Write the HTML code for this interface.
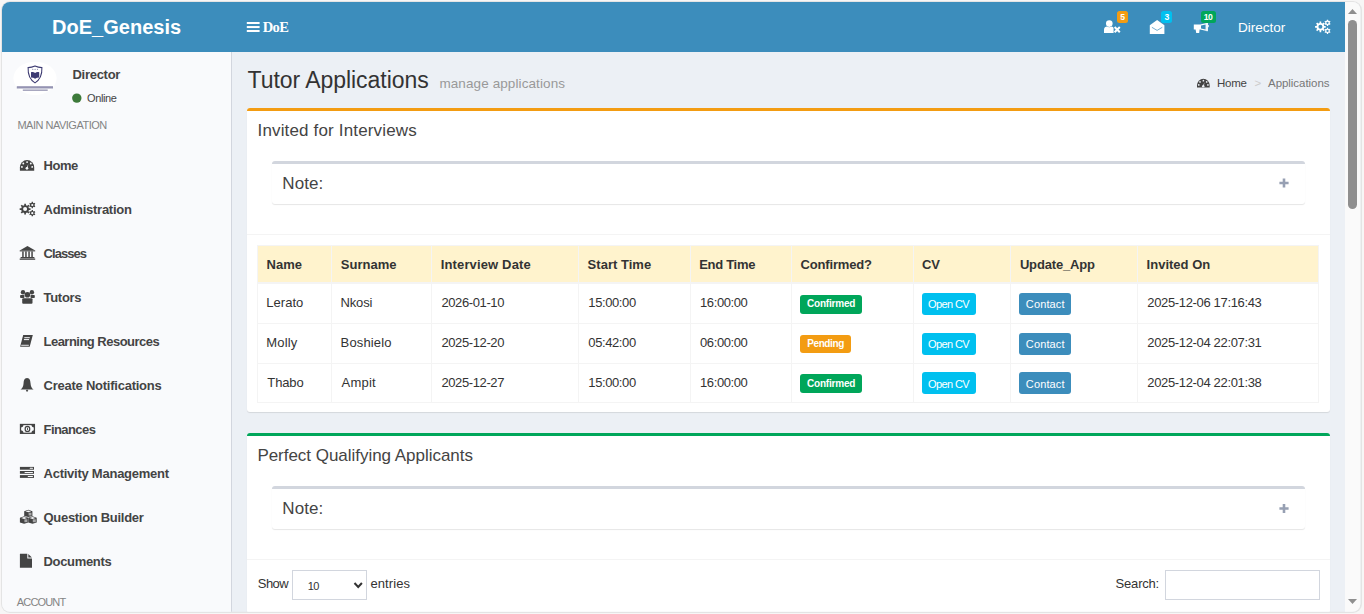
<!DOCTYPE html>
<html><head><meta charset="utf-8">
<style>
html,body{margin:0;padding:0;}
body{width:1364px;height:614px;overflow:hidden;background:#f7f6f6;position:relative;font-family:"Liberation Sans",sans-serif;}
#frame{position:absolute;left:1px;top:1px;width:1361px;height:612px;border-radius:9px;background:#e4e4e4;}
#win{position:absolute;left:0;top:0;width:1364px;height:614px;clip-path:inset(2px 3.6px 2.2px 2px round 8px);background:#ecf0f5;}
.a{position:absolute;}
.t{position:absolute;white-space:nowrap;}
#hdr{left:0;top:0;width:1345px;height:52px;background:#3c8dbc;}
#side{left:0;top:52px;width:231px;height:562px;background:#f9fafc;border-right:1px solid #d2d6de;}
#sb{left:1345px;top:0;width:19px;height:614px;background:#fafafa;}
#thumb{left:1348px;top:20px;width:9px;height:189px;border-radius:4.5px;background:#8f8f8f;}
.box{background:#fff;border-radius:3px;box-shadow:0 1px 1px rgba(0,0,0,0.1);}
.note{background:#fff;border-radius:3px;box-shadow:0 1px 1px rgba(0,0,0,0.1);border-top:3px solid #d2d6de;box-sizing:border-box;}
.hl{height:1px;background:#f4f4f4;}
.vl{width:1px;background:#f4f4f4;}
.badge{border-radius:3px;}
.btn{border-radius:3px;box-sizing:border-box;}
</style></head><body>
<div id="frame"></div>
<div id="win">
<div class="a" id="hdr"></div>
<div class="a" id="side"></div>
<div class="a" id="sb"></div>
<div class="a" id="thumb"></div>
<div class="a" style="left:247px;top:108px;width:1083px;height:304px;background:#fff;border-radius:3px;box-shadow:0 1px 1px rgba(0,0,0,0.1);"></div>
<div class="a" style="left:247px;top:108px;width:1083px;height:3px;background:#f39c12;border-radius:3px 3px 0 0;"></div>
<div class="a" style="left:247px;top:234px;width:1083px;height:1px;background:#f4f4f4;"></div>
<div class="a" style="left:272px;top:161px;width:1033px;height:43px;background:#fff;border-radius:3px;box-shadow:0 1px 1px rgba(0,0,0,0.1);border-top:3px solid #d2d6de;box-sizing:border-box;"></div>
<div class="a" style="left:257px;top:245px;width:1062px;height:158px;background:#fff;box-sizing:border-box;border:1px solid #f4f4f4;"></div>
<div class="a" style="left:258px;top:246px;width:1060px;height:36px;background:#fff3cd;"></div>
<div class="a" style="left:258px;top:282px;width:1060px;height:2px;background:#f4f4f4;"></div>
<div class="a" style="left:258px;top:323px;width:1060px;height:1px;background:#f4f4f4;"></div>
<div class="a" style="left:258px;top:363px;width:1060px;height:1px;background:#f4f4f4;"></div>
<div class="a" style="left:331px;top:246px;width:1px;height:156px;background:#f4f4f4;"></div>
<div class="a" style="left:431px;top:246px;width:1px;height:156px;background:#f4f4f4;"></div>
<div class="a" style="left:578px;top:246px;width:1px;height:156px;background:#f4f4f4;"></div>
<div class="a" style="left:690px;top:246px;width:1px;height:156px;background:#f4f4f4;"></div>
<div class="a" style="left:791px;top:246px;width:1px;height:156px;background:#f4f4f4;"></div>
<div class="a" style="left:913px;top:246px;width:1px;height:156px;background:#f4f4f4;"></div>
<div class="a" style="left:1010px;top:246px;width:1px;height:156px;background:#f4f4f4;"></div>
<div class="a" style="left:1137px;top:246px;width:1px;height:156px;background:#f4f4f4;"></div>
<div class="a" style="left:800px;top:295px;width:62px;height:19px;background:#00a65a;border-radius:3px;"></div>
<div class="a" style="left:922px;top:293px;width:54px;height:22px;background:#00c0ef;border-radius:3px;"></div>
<div class="a" style="left:1019px;top:293px;width:52px;height:22px;background:#3c8dbc;border-radius:3px;"></div>
<div class="a" style="left:800px;top:335px;width:51px;height:18px;background:#f39c12;border-radius:3px;"></div>
<div class="a" style="left:922px;top:333px;width:54px;height:22px;background:#00c0ef;border-radius:3px;"></div>
<div class="a" style="left:1019px;top:333px;width:52px;height:22px;background:#3c8dbc;border-radius:3px;"></div>
<div class="a" style="left:800px;top:374px;width:62px;height:19px;background:#00a65a;border-radius:3px;"></div>
<div class="a" style="left:922px;top:372px;width:54px;height:22px;background:#00c0ef;border-radius:3px;"></div>
<div class="a" style="left:1019px;top:372px;width:52px;height:22px;background:#3c8dbc;border-radius:3px;"></div>
<div class="a" style="left:247px;top:433px;width:1083px;height:200px;background:#fff;border-radius:3px;box-shadow:0 1px 1px rgba(0,0,0,0.1);"></div>
<div class="a" style="left:247px;top:433px;width:1083px;height:3px;background:#00a65a;border-radius:3px 3px 0 0;"></div>
<div class="a" style="left:247px;top:559px;width:1083px;height:1px;background:#f4f4f4;"></div>
<div class="a" style="left:272px;top:486px;width:1033px;height:43px;background:#fff;border-radius:3px;box-shadow:0 1px 1px rgba(0,0,0,0.1);border-top:3px solid #d2d6de;box-sizing:border-box;"></div>
<div class="a" style="left:292px;top:570px;width:75px;height:30px;background:#fff;border:1px solid #d2d6de;box-sizing:border-box;"></div>
<div class="a" style="left:1165px;top:570px;width:155px;height:30px;background:#fff;border:1px solid #d2d6de;box-sizing:border-box;"></div>
<svg class="a" style="left:0;top:0" width="1364" height="614" viewBox="0 0 1364 614">
<path d="M19.90,170.80 L19.90,167.50 A7.15,7.60 0 0 1 34.20,167.50 L34.20,170.80 Z" fill="#444"/>
<circle cx="27.10" cy="162.10" r="0.95" fill="#f9fafc"/>
<circle cx="23.30" cy="163.50" r="0.95" fill="#f9fafc"/>
<circle cx="30.80" cy="163.50" r="0.95" fill="#f9fafc"/>
<circle cx="21.90" cy="166.90" r="0.95" fill="#f9fafc"/>
<circle cx="32.20" cy="166.90" r="0.95" fill="#f9fafc"/>
<path d="M26.30,168.40 L28.30,163.90 L27.60,168.60 Z" fill="#f9fafc"/>
<circle cx="26.95" cy="168.30" r="1.35" fill="#f9fafc"/>
<path fill-rule="evenodd" d="M24.26,205.29 L24.24,203.67 L25.96,203.67 L25.94,205.29 A3.9,3.9 0 0 1 27.20,205.82 L28.33,204.65 L29.55,205.87 L28.38,207.00 A3.9,3.9 0 0 1 28.91,208.26 L30.53,208.24 L30.53,209.96 L28.91,209.94 A3.9,3.9 0 0 1 28.38,211.20 L29.55,212.33 L28.33,213.55 L27.20,212.38 A3.9,3.9 0 0 1 25.94,212.91 L25.96,214.53 L24.24,214.53 L24.26,212.91 A3.9,3.9 0 0 1 23.00,212.38 L21.87,213.55 L20.65,212.33 L21.82,211.20 A3.9,3.9 0 0 1 21.29,209.94 L19.67,209.96 L19.67,208.24 L21.29,208.26 A3.9,3.9 0 0 1 21.82,207.00 L20.65,205.87 L21.87,204.65 L23.00,205.82 A3.9,3.9 0 0 1 24.26,205.29 Z M27.10,209.10 A2.0,2.0 0 1 0 23.10,209.10 A2.0,2.0 0 1 0 27.10,209.10 Z" fill="#444"/>
<path fill-rule="evenodd" d="M31.65,202.79 L31.63,201.87 L32.97,201.87 L32.95,202.79 A2.3,2.3 0 0 1 33.88,203.33 L34.68,202.86 L35.34,204.01 L34.54,204.46 A2.3,2.3 0 0 1 34.54,205.54 L35.34,205.99 L34.68,207.14 L33.88,206.67 A2.3,2.3 0 0 1 32.95,207.21 L32.97,208.13 L31.63,208.13 L31.65,207.21 A2.3,2.3 0 0 1 30.72,206.67 L29.92,207.14 L29.26,205.99 L30.06,205.54 A2.3,2.3 0 0 1 30.06,204.46 L29.26,204.01 L29.92,202.86 L30.72,203.33 A2.3,2.3 0 0 1 31.65,202.79 Z M33.40,205.00 A1.1,1.1 0 1 0 31.20,205.00 A1.1,1.1 0 1 0 33.40,205.00 Z" fill="#444"/>
<path fill-rule="evenodd" d="M31.65,210.99 L31.63,210.07 L32.97,210.07 L32.95,210.99 A2.3,2.3 0 0 1 33.88,211.53 L34.68,211.06 L35.34,212.21 L34.54,212.66 A2.3,2.3 0 0 1 34.54,213.74 L35.34,214.19 L34.68,215.34 L33.88,214.87 A2.3,2.3 0 0 1 32.95,215.41 L32.97,216.33 L31.63,216.33 L31.65,215.41 A2.3,2.3 0 0 1 30.72,214.87 L29.92,215.34 L29.26,214.19 L30.06,213.74 A2.3,2.3 0 0 1 30.06,212.66 L29.26,212.21 L29.92,211.06 L30.72,211.53 A2.3,2.3 0 0 1 31.65,210.99 Z M33.40,213.20 A1.1,1.1 0 1 0 31.20,213.20 A1.1,1.1 0 1 0 33.40,213.20 Z" fill="#444"/>
<path d="M19.7,250.6 L27.45,246 L35.2,250.6 Z" fill="#444"/>
<rect x="19.7" y="250.4" width="15.5" height="1" fill="#444"/>
<rect x="22.2" y="251.4" width="1.5" height="5.8" fill="#444"/>
<rect x="25.2" y="251.4" width="1.5" height="5.8" fill="#444"/>
<rect x="28.3" y="251.4" width="1.5" height="5.8" fill="#444"/>
<rect x="31.3" y="251.4" width="1.5" height="5.8" fill="#444"/>
<rect x="20.6" y="257" width="13.8" height="1.3" fill="#444"/>
<rect x="19.7" y="258.5" width="15.5" height="1.3" fill="#444"/>
<circle cx="23" cy="292.3" r="2.2" fill="#444"/><circle cx="31.9" cy="292.3" r="2.2" fill="#444"/>
<circle cx="27.4" cy="294.8" r="2.8" fill="#444"/>
<rect x="20.1" y="295" width="4.3" height="3" rx="0.8" fill="#444"/><rect x="30.5" y="295" width="4.3" height="3" rx="0.8" fill="#444"/>
<rect x="22.2" y="298.3" width="10.3" height="5.5" rx="1" fill="#444"/>
<path d="M23.2,334.9 L32.8,334.9 L29.7,346.8 L20.1,346.8 Z" fill="#444"/>
<rect x="24.3" y="337.2" width="5.5" height="1" fill="#f9fafc"/><rect x="23.9" y="339.1" width="5.2" height="1" fill="#f9fafc"/>
<rect x="21.2" y="344.8" width="7.6" height="0.9" fill="#f9fafc"/>
<path d="M27.05,377.9 C24.2,378.2 23.8,380.5 23.6,383 C23.4,386.5 22.5,388 20.5,389.6 L33.6,389.6 C31.6,388 30.7,386.5 30.5,383 C30.3,380.5 29.9,378.2 27.05,377.9 Z" fill="#444"/>
<path d="M25.8,390.2 A1.3,1.3 0 0 0 28.3,390.2 Z" fill="#444"/>
<rect x="26.4" y="389.4" width="1.3" height="2.3" rx="0.6" fill="#444"/>
<rect x="20.5" y="424.5" width="13.9" height="8.8" fill="none" stroke="#444" stroke-width="1.3"/>
<path d="M20.5,424.5 L23.5,424.5 A3,3 0 0 1 20.5,427.5 Z M34.4,424.5 L31.4,424.5 A3,3 0 0 0 34.4,427.5 Z M20.5,433.3 L23.5,433.3 A3,3 0 0 0 20.5,430.3 Z M34.4,433.3 L31.4,433.3 A3,3 0 0 1 34.4,430.3 Z" fill="#444"/>
<ellipse cx="27.45" cy="428.9" rx="2.3" ry="2.6" fill="none" stroke="#444" stroke-width="1.2"/>
<rect x="27.0" y="427.6" width="0.9" height="2.6" fill="#444"/>
<rect x="19.9" y="466.9" width="14.1" height="2.8" fill="#444"/>
<rect x="29.7" y="467.79999999999995" width="3.3" height="1.0" rx="0.5" fill="#f9fafc"/>
<rect x="19.9" y="471.0" width="14.1" height="2.8" fill="#444"/>
<rect x="24.5" y="471.9" width="8.5" height="1.0" rx="0.5" fill="#f9fafc"/>
<rect x="19.9" y="475.1" width="14.1" height="2.8" fill="#444"/>
<rect x="27.7" y="476.0" width="5.3" height="1.0" rx="0.5" fill="#f9fafc"/>
<path d="M24.20,511.20 L28.30,509.70 L32.40,511.20 L32.40,515.90 L28.30,517.10 L24.20,515.90 Z" fill="#444"/><path d="M25.40,511.30 L28.30,510.50 L31.20,511.30 L28.30,512.30 Z" fill="#f9fafc"/><rect x="28.60" y="512.70" width="2.90" height="2.80" fill="#f9fafc" opacity="0.55"/>
<path d="M19.90,517.80 L24.10,516.30 L28.30,517.80 L28.30,522.60 L24.10,523.80 L19.90,522.60 Z" fill="#444"/><path d="M21.10,517.90 L24.10,517.10 L27.10,517.90 L24.10,518.90 Z" fill="#f9fafc"/><rect x="24.40" y="519.30" width="3.00" height="2.90" fill="#f9fafc" opacity="0.55"/>
<path d="M28.30,517.80 L32.50,516.30 L36.70,517.80 L36.70,522.60 L32.50,523.80 L28.30,522.60 Z" fill="#444"/><path d="M29.50,517.90 L32.50,517.10 L35.50,517.90 L32.50,518.90 Z" fill="#f9fafc"/><rect x="32.80" y="519.30" width="3.00" height="2.90" fill="#f9fafc" opacity="0.55"/>
<path d="M19.9,553.7 L27.3,553.7 L27.3,558.6 L32,558.6 L32,567.8 L19.9,567.8 Z" fill="#444"/>
<path d="M28.3,553.9 L31.9,557.6 L28.3,557.6 Z" fill="#444"/>
<path d="M1197.00,87.40 L1197.00,85.45 A6.35,6.75 0 0 1 1209.70,85.45 L1209.70,87.40 Z" fill="#444"/>
<circle cx="1203.39" cy="80.65" r="0.84" fill="#ecf0f5"/>
<circle cx="1200.02" cy="81.90" r="0.84" fill="#ecf0f5"/>
<circle cx="1206.68" cy="81.90" r="0.84" fill="#ecf0f5"/>
<circle cx="1198.78" cy="84.92" r="0.84" fill="#ecf0f5"/>
<circle cx="1207.92" cy="84.92" r="0.84" fill="#ecf0f5"/>
<path d="M1202.68,86.25 L1204.46,82.25 L1203.84,86.43 Z" fill="#ecf0f5"/>
<circle cx="1203.26" cy="86.16" r="1.20" fill="#ecf0f5"/>
<rect x="246.8" y="22.0" width="12.8" height="2.0" fill="#fff"/>
<rect x="246.8" y="26.05" width="12.8" height="2.0" fill="#fff"/>
<rect x="246.8" y="30.0" width="12.8" height="2.0" fill="#fff"/>
<circle cx="1109.3" cy="23.6" r="3.3" fill="#fff"/>
<path d="M1104,32.9 L1104,30 C1104,27.6 1105.5,26.7 1107,26.6 C1108.2,27.4 1110.4,27.4 1111.6,26.6 C1112.6,26.7 1113.3,27.3 1113.6,28 L1113.6,32.9 Z" fill="#fff"/>
<path d="M1114.6,27.0 L1119.8,32.3 M1119.8,27.0 L1114.6,32.3" stroke="#fff" stroke-width="2.0"/>
<path d="M1149.8,25.2 L1157.1,19.9 L1164.4,25.2 L1164.4,34 L1149.8,34 Z" fill="#fff"/>
<path d="M1151.9,27.3 L1157.1,30.4 L1162.3,27.3" fill="none" stroke="#3c8dbc" stroke-width="0.7"/>
<path d="M1193.8,24.4 L1200.2,24.4 L1206.8,23.0 L1206.8,31.0 L1200.2,29.4 L1199.6,29.4 L1199.2,32.9 L1196.2,32.9 L1195.6,29.4 L1193.8,29.4 Z" fill="#fff"/>
<path d="M1201.0,25.4 L1205.6,24.5 L1205.6,29.5 L1201.0,28.4 Z" fill="#3c8dbc"/>
<rect x="1206.4" y="22.9" width="1.5" height="8.3" fill="#fff"/><rect x="1207.7" y="25.0" width="1.0" height="2.2" fill="#fff"/>
<path fill-rule="evenodd" d="M1319.56,22.99 L1319.56,21.47 L1321.24,21.47 L1321.24,22.99 A3.9,3.9 0 0 1 1322.50,23.52 L1323.57,22.43 L1324.77,23.63 L1323.68,24.70 A3.9,3.9 0 0 1 1324.21,25.96 L1325.73,25.96 L1325.73,27.64 L1324.21,27.64 A3.9,3.9 0 0 1 1323.68,28.90 L1324.77,29.97 L1323.57,31.17 L1322.50,30.08 A3.9,3.9 0 0 1 1321.24,30.61 L1321.24,32.13 L1319.56,32.13 L1319.56,30.61 A3.9,3.9 0 0 1 1318.30,30.08 L1317.23,31.17 L1316.03,29.97 L1317.12,28.90 A3.9,3.9 0 0 1 1316.59,27.64 L1315.07,27.64 L1315.07,25.96 L1316.59,25.96 A3.9,3.9 0 0 1 1317.12,24.70 L1316.03,23.63 L1317.23,22.43 L1318.30,23.52 A3.9,3.9 0 0 1 1319.56,22.99 Z M1322.40,26.80 A2.0,2.0 0 1 0 1318.40,26.80 A2.0,2.0 0 1 0 1322.40,26.80 Z" fill="#fff"/>
<path fill-rule="evenodd" d="M1326.85,20.59 L1326.83,19.67 L1328.17,19.67 L1328.15,20.59 A2.3,2.3 0 0 1 1329.08,21.13 L1329.88,20.66 L1330.54,21.81 L1329.74,22.26 A2.3,2.3 0 0 1 1329.74,23.34 L1330.54,23.79 L1329.88,24.94 L1329.08,24.47 A2.3,2.3 0 0 1 1328.15,25.01 L1328.17,25.93 L1326.83,25.93 L1326.85,25.01 A2.3,2.3 0 0 1 1325.92,24.47 L1325.12,24.94 L1324.46,23.79 L1325.26,23.34 A2.3,2.3 0 0 1 1325.26,22.26 L1324.46,21.81 L1325.12,20.66 L1325.92,21.13 A2.3,2.3 0 0 1 1326.85,20.59 Z M1328.65,22.80 A1.15,1.15 0 1 0 1326.35,22.80 A1.15,1.15 0 1 0 1328.65,22.80 Z" fill="#fff"/>
<path fill-rule="evenodd" d="M1326.85,28.69 L1326.83,27.77 L1328.17,27.77 L1328.15,28.69 A2.3,2.3 0 0 1 1329.08,29.23 L1329.88,28.76 L1330.54,29.91 L1329.74,30.36 A2.3,2.3 0 0 1 1329.74,31.44 L1330.54,31.89 L1329.88,33.04 L1329.08,32.57 A2.3,2.3 0 0 1 1328.15,33.11 L1328.17,34.03 L1326.83,34.03 L1326.85,33.11 A2.3,2.3 0 0 1 1325.92,32.57 L1325.12,33.04 L1324.46,31.89 L1325.26,31.44 A2.3,2.3 0 0 1 1325.26,30.36 L1324.46,29.91 L1325.12,28.76 L1325.92,29.23 A2.3,2.3 0 0 1 1326.85,28.69 Z M1328.65,30.90 A1.15,1.15 0 1 0 1326.35,30.90 A1.15,1.15 0 1 0 1328.65,30.90 Z" fill="#fff"/>
<rect x="1117" y="11" width="11" height="12" rx="2.5" fill="#f39c12"/>
<rect x="1161" y="11" width="11" height="12" rx="2.5" fill="#00c0ef"/>
<rect x="1201" y="11" width="15" height="12" rx="2.5" fill="#00a65a"/>
<ellipse cx="35.0" cy="78.3" rx="21.6" ry="16.6" fill="#fff"/>
<path d="M35,66.1 C37.4,67.2 39.6,67.6 41.9,67.6 C42.2,74.6 39.9,80 35,82.9 C30.1,80 27.8,74.6 28.1,67.6 C30.4,67.6 32.6,67.2 35,66.1 Z" fill="none" stroke="#3d3b72" stroke-width="1.05"/>
<path d="M31,72.2 C32.5,71.6 34,72 35.1,72.9 C36.2,72 37.7,71.6 39.2,72.2 L39.2,77.6 C37.6,77.6 36.2,78 35.1,78.8 C34,78 32.6,77.6 31,77.6 Z" fill="#3d3b72"/>
<circle cx="32.80" cy="69.3" r="0.55" fill="#3d3b72" opacity="0.8"/>
<circle cx="35.10" cy="69.3" r="0.55" fill="#3d3b72" opacity="0.8"/>
<circle cx="37.40" cy="69.3" r="0.55" fill="#3d3b72" opacity="0.8"/>
<rect x="16.8" y="86.2" width="36.2" height="2.3" fill="#3d3b72" opacity="0.55"/>
<rect x="22.8" y="89.4" width="24.9" height="1.6" fill="#3d3b72" opacity="0.45"/>
<circle cx="76.8" cy="98.1" r="4.7" fill="#3d7a3a"/>
<path d="M1284,178.4 L1284,187.6 M1279.4,183.0 L1288.6,183.0" stroke="#97a0b3" stroke-width="2.6"/>
<path d="M1284,503.9 L1284,513.1 M1279.4,508.5 L1288.6,508.5" stroke="#97a0b3" stroke-width="2.6"/>
<path d="M354.5,583.0 L358.2,587.0 L361.9,583.0" fill="none" stroke="#333" stroke-width="2.0"/>
<path d="M1348,14 L1352.5,9 L1357,14 Z" fill="#8f8f8f"/>
<path d="M1348,599 L1357,599 L1352.5,604 Z" fill="#8f8f8f"/>
</svg>
<div class="t" style="left:52.00px;top:16.00px;font-size:20px;line-height:22px;color:#fff;font-weight:bold;letter-spacing:0.018px;">DoE_Genesis</div>
<div class="t" style="left:262.80px;top:18.80px;font-size:14.5px;line-height:16px;color:#fff;font-weight:bold;font-family:'Liberation Serif', serif;letter-spacing:-0.661px;">DoE</div>
<div class="t" style="left:1238.10px;top:20.30px;font-size:13.6px;line-height:15px;color:#fff;letter-spacing:-0.065px;">Director</div>
<div class="t" style="left:72.50px;top:66.80px;font-size:13px;line-height:15px;color:#444;font-weight:bold;letter-spacing:-0.284px;">Director</div>
<div class="t" style="left:87.00px;top:91.90px;font-size:11px;line-height:12px;color:#444;letter-spacing:-0.376px;">Online</div>
<div class="t" style="left:17.40px;top:118.60px;font-size:11px;line-height:12px;color:#848484;letter-spacing:-0.494px;">MAIN NAVIGATION</div>
<div class="t" style="left:43.50px;top:158.20px;font-size:13px;line-height:15px;color:#444;font-weight:bold;letter-spacing:-0.429px;">Home</div>
<div class="t" style="left:43.50px;top:202.20px;font-size:13px;line-height:15px;color:#444;font-weight:bold;letter-spacing:-0.253px;">Administration</div>
<div class="t" style="left:43.50px;top:246.20px;font-size:13px;line-height:15px;color:#444;font-weight:bold;letter-spacing:-0.937px;">Classes</div>
<div class="t" style="left:43.50px;top:290.20px;font-size:13px;line-height:15px;color:#444;font-weight:bold;letter-spacing:-0.289px;">Tutors</div>
<div class="t" style="left:43.50px;top:334.20px;font-size:13px;line-height:15px;color:#444;font-weight:bold;letter-spacing:-0.515px;">Learning Resources</div>
<div class="t" style="left:43.50px;top:378.20px;font-size:13px;line-height:15px;color:#444;font-weight:bold;letter-spacing:-0.241px;">Create Notifications</div>
<div class="t" style="left:43.50px;top:422.20px;font-size:13px;line-height:15px;color:#444;font-weight:bold;letter-spacing:-0.561px;">Finances</div>
<div class="t" style="left:43.50px;top:466.20px;font-size:13px;line-height:15px;color:#444;font-weight:bold;letter-spacing:-0.245px;">Activity Management</div>
<div class="t" style="left:43.50px;top:510.20px;font-size:13px;line-height:15px;color:#444;font-weight:bold;letter-spacing:-0.298px;">Question Builder</div>
<div class="t" style="left:43.50px;top:554.20px;font-size:13px;line-height:15px;color:#444;font-weight:bold;letter-spacing:-0.332px;">Documents</div>
<div class="t" style="left:16.80px;top:596.20px;font-size:11px;line-height:12px;color:#848484;letter-spacing:-0.845px;">ACCOUNT</div>
<div class="t" style="left:247.50px;top:67.20px;font-size:23px;line-height:26px;color:#333;letter-spacing:-0.043px;">Tutor Applications</div>
<div class="t" style="left:439.40px;top:76.00px;font-size:13.5px;line-height:15px;color:#999;letter-spacing:0.101px;">manage applications</div>
<div class="t" style="left:1217.00px;top:77.00px;font-size:11.5px;line-height:12px;color:#444;letter-spacing:-0.227px;">Home</div>
<div class="t" style="left:1254.50px;top:77.00px;font-size:11.5px;line-height:12px;color:#ccc;">&gt;</div>
<div class="t" style="left:1268.00px;top:77.00px;font-size:11.5px;line-height:12px;color:#777;letter-spacing:-0.042px;">Applications</div>
<div class="t" style="left:257.50px;top:121.10px;font-size:17px;line-height:19px;color:#444;letter-spacing:0.157px;">Invited for Interviews</div>
<div class="t" style="left:282.30px;top:174.00px;font-size:17px;line-height:19px;color:#444;letter-spacing:0.073px;">Note:</div>
<div class="t" style="left:266.50px;top:256.80px;font-size:13px;line-height:15px;color:#333;font-weight:bold;letter-spacing:0.041px;">Name</div>
<div class="t" style="left:340.80px;top:256.80px;font-size:13px;line-height:15px;color:#333;font-weight:bold;">Surname</div>
<div class="t" style="left:440.70px;top:256.80px;font-size:13px;line-height:15px;color:#333;font-weight:bold;letter-spacing:0.145px;">Interview Date</div>
<div class="t" style="left:587.60px;top:256.80px;font-size:13px;line-height:15px;color:#333;font-weight:bold;letter-spacing:0.021px;">Start Time</div>
<div class="t" style="left:699.20px;top:256.80px;font-size:13px;line-height:15px;color:#333;font-weight:bold;letter-spacing:-0.292px;">End Time</div>
<div class="t" style="left:800.50px;top:256.80px;font-size:13px;line-height:15px;color:#333;font-weight:bold;letter-spacing:-0.156px;">Confirmed?</div>
<div class="t" style="left:921.90px;top:256.80px;font-size:13px;line-height:15px;color:#333;font-weight:bold;">CV</div>
<div class="t" style="left:1019.90px;top:256.80px;font-size:13px;line-height:15px;color:#333;font-weight:bold;letter-spacing:-0.158px;">Update_App</div>
<div class="t" style="left:1146.60px;top:256.80px;font-size:13px;line-height:15px;color:#333;font-weight:bold;letter-spacing:0.009px;">Invited On</div>
<div class="t" style="left:266.30px;top:295.10px;font-size:13px;line-height:15px;color:#333;letter-spacing:0.034px;">Lerato</div>
<div class="t" style="left:340.60px;top:295.10px;font-size:13px;line-height:15px;color:#333;letter-spacing:-0.180px;">Nkosi</div>
<div class="t" style="left:441.40px;top:295.10px;font-size:13px;line-height:15px;color:#333;letter-spacing:-0.385px;">2026-01-10</div>
<div class="t" style="left:588.30px;top:295.10px;font-size:13px;line-height:15px;color:#333;letter-spacing:-0.396px;">15:00:00</div>
<div class="t" style="left:700.00px;top:295.10px;font-size:13px;line-height:15px;color:#333;letter-spacing:-0.396px;">16:00:00</div>
<div class="t" style="left:1147.30px;top:295.10px;font-size:13px;line-height:15px;color:#333;letter-spacing:-0.344px;">2025-12-06 17:16:43</div>
<div class="t" style="left:266.30px;top:335.10px;font-size:13px;line-height:15px;color:#333;letter-spacing:0.141px;">Molly</div>
<div class="t" style="left:340.60px;top:335.10px;font-size:13px;line-height:15px;color:#333;letter-spacing:0.138px;">Boshielo</div>
<div class="t" style="left:441.40px;top:335.10px;font-size:13px;line-height:15px;color:#333;letter-spacing:-0.385px;">2025-12-20</div>
<div class="t" style="left:588.30px;top:335.10px;font-size:13px;line-height:15px;color:#333;letter-spacing:-0.396px;">05:42:00</div>
<div class="t" style="left:700.00px;top:335.10px;font-size:13px;line-height:15px;color:#333;letter-spacing:-0.396px;">06:00:00</div>
<div class="t" style="left:1147.30px;top:335.10px;font-size:13px;line-height:15px;color:#333;letter-spacing:-0.344px;">2025-12-04 22:07:31</div>
<div class="t" style="left:267.30px;top:375.10px;font-size:13px;line-height:15px;color:#333;letter-spacing:-0.108px;">Thabo</div>
<div class="t" style="left:341.60px;top:375.10px;font-size:13px;line-height:15px;color:#333;letter-spacing:0.195px;">Ampit</div>
<div class="t" style="left:441.40px;top:375.10px;font-size:13px;line-height:15px;color:#333;letter-spacing:-0.385px;">2025-12-27</div>
<div class="t" style="left:588.30px;top:375.10px;font-size:13px;line-height:15px;color:#333;letter-spacing:-0.396px;">15:00:00</div>
<div class="t" style="left:700.00px;top:375.10px;font-size:13px;line-height:15px;color:#333;letter-spacing:-0.396px;">16:00:00</div>
<div class="t" style="left:1147.30px;top:375.10px;font-size:13px;line-height:15px;color:#333;letter-spacing:-0.344px;">2025-12-04 22:01:38</div>
<div class="t" style="left:257.40px;top:445.90px;font-size:17px;line-height:19px;color:#444;letter-spacing:-0.030px;">Perfect Qualifying Applicants</div>
<div class="t" style="left:282.30px;top:499.00px;font-size:17px;line-height:19px;color:#444;letter-spacing:0.073px;">Note:</div>
<div class="t" style="left:257.80px;top:575.60px;font-size:13px;line-height:15px;color:#333;letter-spacing:-0.577px;">Show</div>
<div class="t" style="left:370.50px;top:575.60px;font-size:13px;line-height:15px;color:#333;letter-spacing:0.080px;">entries</div>
<div class="t" style="left:1115.60px;top:575.80px;font-size:13px;line-height:15px;color:#333;letter-spacing:-0.198px;">Search:</div>
<div class="t" style="left:1120.30px;top:11.70px;font-size:8.6px;line-height:10px;color:#fff;font-weight:bold;">5</div>
<div class="t" style="left:1164.60px;top:11.70px;font-size:8.6px;line-height:10px;color:#fff;font-weight:bold;">3</div>
<div class="t" style="left:1203.80px;top:11.70px;font-size:8.6px;line-height:10px;color:#fff;font-weight:bold;letter-spacing:-0.479px;">10</div>
<div class="t" style="left:807.00px;top:298.00px;font-size:10px;line-height:11px;color:#fff;font-weight:bold;letter-spacing:-0.199px;">Confirmed</div>
<div class="t" style="left:928.00px;top:298.00px;font-size:11px;line-height:12px;color:#fff;letter-spacing:-0.602px;">Open CV</div>
<div class="t" style="left:1025.80px;top:298.00px;font-size:11px;line-height:12px;color:#fff;letter-spacing:0.141px;">Contact</div>
<div class="t" style="left:807.20px;top:338.30px;font-size:10px;line-height:11px;color:#fff;font-weight:bold;letter-spacing:-0.389px;">Pending</div>
<div class="t" style="left:928.00px;top:338.00px;font-size:11px;line-height:12px;color:#fff;letter-spacing:-0.602px;">Open CV</div>
<div class="t" style="left:1025.80px;top:338.00px;font-size:11px;line-height:12px;color:#fff;letter-spacing:0.141px;">Contact</div>
<div class="t" style="left:807.00px;top:377.50px;font-size:10px;line-height:11px;color:#fff;font-weight:bold;letter-spacing:-0.199px;">Confirmed</div>
<div class="t" style="left:928.00px;top:377.50px;font-size:11px;line-height:12px;color:#fff;letter-spacing:-0.602px;">Open CV</div>
<div class="t" style="left:1025.80px;top:377.50px;font-size:11px;line-height:12px;color:#fff;letter-spacing:0.141px;">Contact</div>
<div class="t" style="left:307.80px;top:580.40px;font-size:11px;line-height:12px;color:#333;letter-spacing:-0.718px;">10</div>
</div>
</body></html>
